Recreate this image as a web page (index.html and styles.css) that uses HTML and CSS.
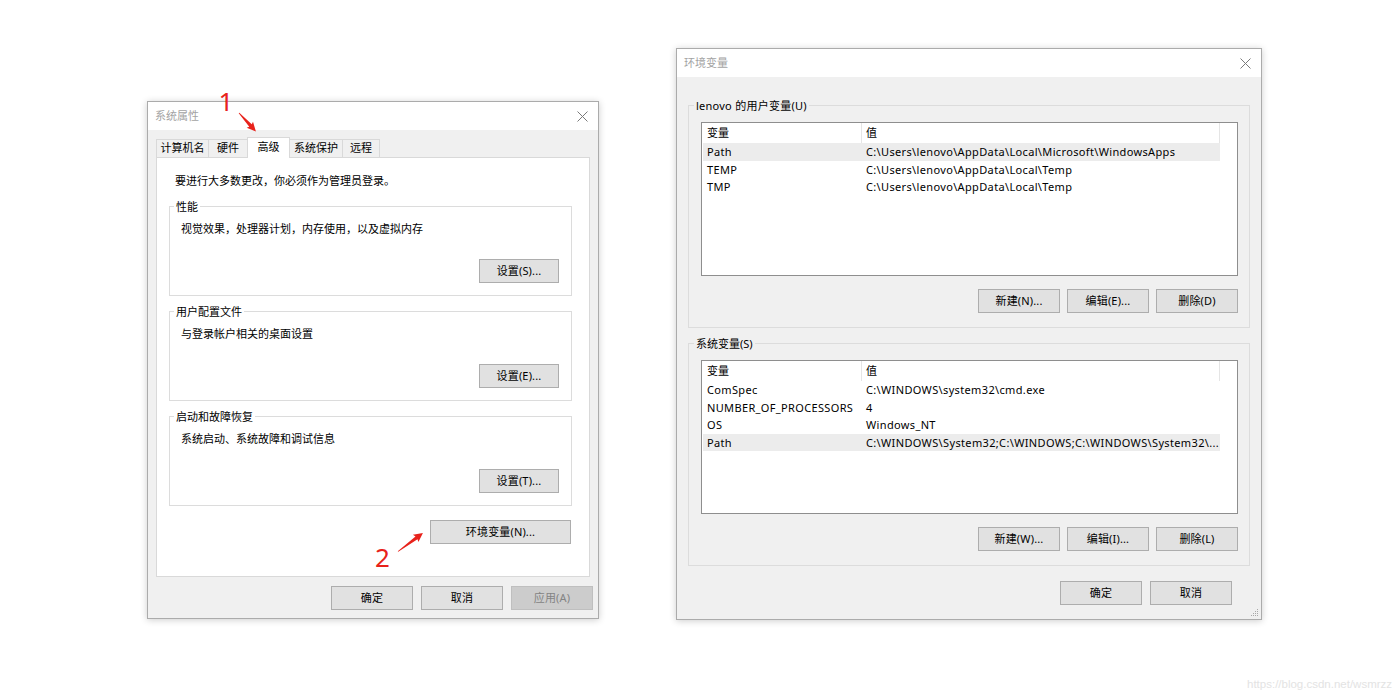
FILE: index.html
```html
<!DOCTYPE html>
<html lang="zh-CN">
<head>
<meta charset="utf-8">
<title>系统属性 - 环境变量</title>
<link rel="stylesheet" href="styles.css">
</head>
<body>
<div class="canvas">

  <section class="win win-sys">
    <header class="titlebar">
      <span class="title">系统属性</span>
      <svg class="close" viewBox="0 0 11 11"><path d="M0.5 0.5L10.5 10.5M10.5 0.5L0.5 10.5"/></svg>
    </header>
    <div class="sys-body">
      <nav class="tabs">
        <span class="tab t-name">计算机名</span>
        <span class="tab t-hw">硬件</span>
        <span class="tab t-adv sel">高级</span>
        <span class="tab t-prot">系统保护</span>
        <span class="tab t-remote">远程</span>
      </nav>
      <div class="panel">
        <p class="intro">要进行大多数更改，你必须作为管理员登录。</p>
        <div class="group">
          <span class="glabel">性能</span>
          <p class="gdesc">视觉效果，处理器计划，内存使用，以及虚拟内存</p>
          <div class="gbtns"><button class="btn">设置(S)...</button></div>
        </div>
        <div class="group">
          <span class="glabel">用户配置文件</span>
          <p class="gdesc">与登录帐户相关的桌面设置</p>
          <div class="gbtns"><button class="btn">设置(E)...</button></div>
        </div>
        <div class="group">
          <span class="glabel">启动和故障恢复</span>
          <p class="gdesc">系统启动、系统故障和调试信息</p>
          <div class="gbtns"><button class="btn">设置(T)...</button></div>
        </div>
        <div class="envrow"><button class="btn btn-env">环境变量(N)...</button></div>
      </div>
      <div class="footer">
        <button class="btn">确定</button>
        <button class="btn">取消</button>
        <button class="btn btn-disabled">应用(A)</button>
      </div>
    </div>
  </section>

  <section class="win win-env">
    <header class="titlebar">
      <span class="title">环境变量</span>
      <svg class="close" viewBox="0 0 11 11"><path d="M0.5 0.5L10.5 10.5M10.5 0.5L0.5 10.5"/></svg>
    </header>
    <div class="env-body">
      <div class="group">
        <span class="glabel latin">lenovo 的用户变量(U)</span>
        <div class="list">
          <div class="lrow lhead"><span>变量</span><span>值</span></div>
          <div class="lrow hl"><span>Path</span><span>C:\Users\lenovo\AppData\Local\Microsoft\WindowsApps</span></div>
          <div class="lrow"><span>TEMP</span><span>C:\Users\lenovo\AppData\Local\Temp</span></div>
          <div class="lrow"><span>TMP</span><span>C:\Users\lenovo\AppData\Local\Temp</span></div>
        </div>
        <div class="lbtns">
          <button class="btn">新建(N)...</button>
          <button class="btn">编辑(E)...</button>
          <button class="btn">删除(D)</button>
        </div>
      </div>
      <div class="group">
        <span class="glabel">系统变量(S)</span>
        <div class="list">
          <div class="lrow lhead"><span>变量</span><span>值</span></div>
          <div class="lrow"><span>ComSpec</span><span>C:\WINDOWS\system32\cmd.exe</span></div>
          <div class="lrow"><span>NUMBER_OF_PROCESSORS</span><span>4</span></div>
          <div class="lrow"><span>OS</span><span>Windows_NT</span></div>
          <div class="lrow hl"><span>Path</span><span>C:\WINDOWS\System32;C:\WINDOWS;C:\WINDOWS\System32\...</span></div>
        </div>
        <div class="lbtns">
          <button class="btn">新建(W)...</button>
          <button class="btn">编辑(I)...</button>
          <button class="btn">删除(L)</button>
        </div>
      </div>
      <div class="env-footer">
        <button class="btn">确定</button>
        <button class="btn">取消</button>
      </div>
    </div>
    <svg class="grip" viewBox="0 0 8 8">
      <rect x="6" y="0" width="1" height="1"/>
      <rect x="4" y="2" width="1" height="1"/><rect x="6" y="2" width="1" height="1"/>
      <rect x="2" y="4" width="1" height="1"/><rect x="4" y="4" width="1" height="1"/><rect x="6" y="4" width="1" height="1"/>
      <rect x="0" y="6" width="1" height="1"/><rect x="2" y="6" width="1" height="1"/><rect x="4" y="6" width="1" height="1"/><rect x="6" y="6" width="1" height="1"/>
    </svg>
  </section>

  <svg class="marks" viewBox="0 0 1400 699">
    <text x="226" y="111" class="digit">1</text>
    <polygon transform="translate(239 113) rotate(47.4)" points="0,-0.4 17,-1.7 16,-4.3 25,0 16,4.3 17,1.7 0,0.4"/>
    <text x="382.5" y="567" class="digit">2</text>
    <polygon transform="translate(398 551.5) rotate(-36.5)" points="0,-0.4 23,-1.7 22,-4.6 31,0 22,4.6 23,1.7 0,0.4"/>
  </svg>

  <span class="wm">https://blog.csdn.net/wsmrzz</span>
</div>
</body>
</html>
```

FILE: styles.css
```css
* { box-sizing: border-box; }
html, body { margin: 0; padding: 0; background: #fff; }
body {
  font-family: "Noto Sans", "Noto Sans CJK SC", sans-serif;
  font-size: 11px;
  color: #000;
}
.canvas { position: relative; width: 1400px; height: 699px; overflow: hidden; background: #fff; }

/* windows */
.win {
  position: absolute;
  display: flex;
  flex-direction: column;
  background: #f0f0f0;
  border: 1px solid #ababab;
  box-shadow: 0 1px 7px rgba(0, 0, 0, 0.2);
}
.win-sys { left: 147px; top: 101px; width: 452px; height: 518px; }
.win-env { left: 676px; top: 48px; width: 586px; height: 572px; }

.titlebar {
  flex: none;
  height: 28px;
  background: #fff;
  display: flex;
  align-items: center;
  justify-content: space-between;
  padding: 0 10px 0 7px;
}
.title { color: #a3a3a3; line-height: 16px; }
.close { width: 11px; height: 11px; stroke: #7a7a7a; stroke-width: 1; fill: none; }

/* buttons */
.btn {
  font: inherit;
  color: #000;
  background: #e1e1e1;
  border: 1px solid #adadad;
  height: 24px;
  width: 80px;
  padding: 0;
  line-height: 20px;
  text-align: center;
  letter-spacing: 0.15px;
}
.btn-disabled { background: #cccccc; border-color: #bfbfbf; color: #838383; }

/* system properties */
.sys-body { flex: 1; padding: 7px 8px 0 8px; display: flex; flex-direction: column; }
.tabs { display: flex; align-items: flex-end; height: 20px; flex: none; }
.tab {
  height: 18px;
  border: 1px solid #d9d9d9;
  border-bottom: none;
  background: #f0f0f0;
  margin-left: -1px;
  text-align: center;
  line-height: 16px;
}
.tab:first-child { margin-left: 0; }
.tab.sel {
  height: 21px;
  margin-bottom: -1px;
  background: #fff;
  position: relative;
  z-index: 1;
  line-height: 17px;
}
.t-name { width: 53px; }
.t-hw { width: 40px; }
.t-adv { width: 43px; }
.t-prot { width: 54px; }
.t-remote { width: 38px; }

.panel {
  flex: none;
  height: 420px;
  background: #fff;
  border: 1px solid #d9d9d9;
  padding: 15px 17px 0 12px;
}
.intro { margin: 0 0 0 6px; line-height: 16px; }
.group { border: 1px solid #dcdcdc; margin-top: 15px; }
.intro + .group { margin-top: 17px; }
.glabel {
  display: block;
  width: fit-content;
  margin: -8px 0 0 4px;
  padding: 0 2px;
  line-height: 15px;
  background: #fff;
}
.gdesc { margin: 7px 0 0 11px; line-height: 16px; }
.gbtns { display: flex; justify-content: flex-end; margin-top: 22px; padding: 0 12px 12px 0; }
.envrow { display: flex; justify-content: flex-end; margin-top: 14px; padding-right: 1px; }
.btn-env { width: 141px; }
.footer { display: flex; justify-content: flex-end; gap: 8px; margin: 9px -3px 0 0; }
.footer .btn { width: 82px; }

/* environment variables */
.env-body { flex: 1; padding: 0 11px; display: flex; flex-direction: column; }
.env-body .group { margin-top: 15px; }
.env-body .group:first-child { margin-top: 28px; }
.env-body .glabel { background: #f0f0f0; margin-left: 5px; }
.latin { letter-spacing: 0.25px; }
.list {
  margin: 9px 0 0 12px;
  width: 537px;
  height: 154px;
  background: #fff;
  border: 1px solid #8e8e8e;
  padding-left: 1px;
}
.lrow {
  display: grid;
  grid-template-columns: 159px 358px;
  width: 517px;
  height: 17.5px;
  line-height: 17.5px;
}
.lrow span { padding-left: 4px; white-space: nowrap; overflow: hidden; letter-spacing: 0.35px; }
.lhead { height: 20px; line-height: 20px; }
.lhead span { border-right: 1px solid #e5e5e5; letter-spacing: 0; }
.lrow.hl { background: #ececec; }
.lbtns { display: flex; justify-content: flex-end; gap: 7px; margin-top: 13px; padding: 0 11px 14px 0; }
.lbtns .btn { width: 82px; }
.env-footer { display: flex; justify-content: flex-end; gap: 8px; margin-top: 15px; padding-right: 18px; }
.env-footer .btn { width: 82px; }

.grip { position: absolute; right: 2px; bottom: 2px; width: 8px; height: 8px; fill: #a8a8a8; }

/* annotations */
.marks { position: absolute; left: 0; top: 0; width: 1400px; height: 699px; pointer-events: none; }
.marks polygon { fill: #e8221b; }
.digit { font-family: "Noto Sans", sans-serif; font-size: 26px; fill: #e8221b; text-anchor: middle; }

.wm {
  position: absolute;
  left: 1247px;
  top: 678px;
  font-family: "Liberation Sans", sans-serif;
  font-size: 11.5px;
  color: #e3e3e3;
}
```
